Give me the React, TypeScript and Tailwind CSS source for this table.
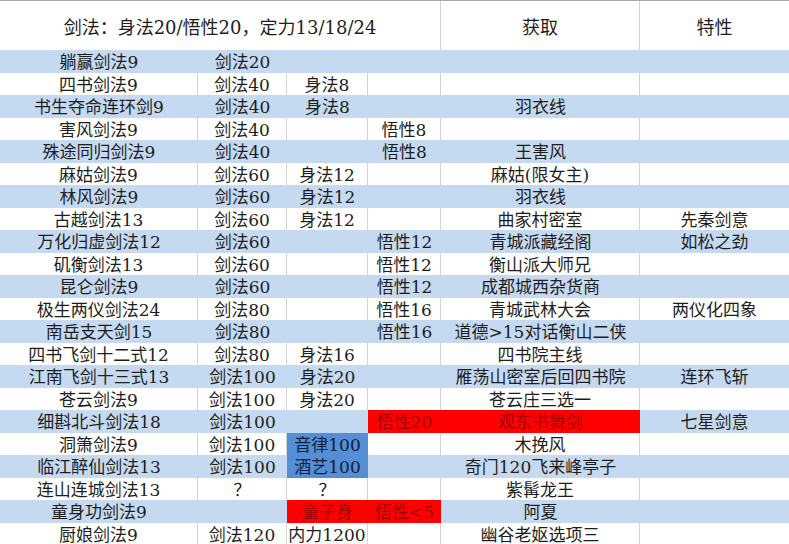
import React from "react";

type Cell = { t?: string; bg?: "red" | "dblue" };
type Row = [string, string, Cell | string, Cell | string, Cell | string, string];

const rows: Row[] = [
  ["躺赢剑法9", "剑法20", "", "", "", ""],
  ["四书剑法9", "剑法40", "身法8", "", "", ""],
  ["书生夺命连环剑9", "剑法40", "身法8", "", "羽衣线", ""],
  ["害风剑法9", "剑法40", "", "悟性8", "", ""],
  ["殊途同归剑法9", "剑法40", "", "悟性8", "王害风", ""],
  ["麻姑剑法9", "剑法60", "身法12", "", "麻姑(限女主)", ""],
  ["林风剑法9", "剑法60", "身法12", "", "羽衣线", ""],
  ["古越剑法13", "剑法60", "身法12", "", "曲家村密室", "先秦剑意"],
  ["万化归虚剑法12", "剑法60", "", "悟性12", "青城派藏经阁", "如松之劲"],
  ["矶衡剑法13", "剑法60", "", "悟性12", "衡山派大师兄", ""],
  ["昆仑剑法9", "剑法60", "", "悟性12", "成都城西杂货商", ""],
  ["极生两仪剑法24", "剑法80", "", "悟性16", "青城武林大会", "两仪化四象"],
  ["南岳支天剑15", "剑法80", "", "悟性16", "道德>15对话衡山二侠", ""],
  ["四书飞剑十二式12", "剑法80", "身法16", "", "四书院主线", ""],
  ["江南飞剑十三式13", "剑法100", "身法20", "", "雁荡山密室后回四书院", "连环飞斩"],
  ["苍云剑法9", "剑法100", "身法20", "", "苍云庄三选一", ""],
  ["细斟北斗剑法18", "剑法100", "", { t: "悟性20", bg: "red" }, { t: "观东书舞剑", bg: "red" }, "七星剑意"],
  ["洞箫剑法9", "剑法100", { t: "音律100", bg: "dblue" }, "", "木挽风", ""],
  ["临江醉仙剑法13", "剑法100", { t: "酒艺100", bg: "dblue" }, "", "奇门120飞来峰亭子", ""],
  ["连山连城剑法13", "？", "？", "", "紫髯龙王", ""],
  ["童身功剑法9", "", { t: "童子身", bg: "red" }, { t: "悟性<5", bg: "red" }, "阿夏", ""],
  ["厨娘剑法9", "剑法120", "内力1200", "", "幽谷老妪选项三", ""],
];

const widths = ["w-[198px]", "w-[89px]", "w-[81px]", "w-[73px]", "w-[199px]", "flex-1"];

function norm(c: Cell | string): Cell {
  return typeof c === "string" ? { t: c } : c;
}

export default function App() {
  return (
    <div
      className="w-[789px] h-[544px] overflow-hidden bg-white text-[#1e1e1e]"
      style={{ fontFamily: '"DejaVu Serif", "Noto Sans CJK SC", serif' }}
    >
      <div className="flex h-[50px] border-t border-[#a9a9a9] text-[18px]">
        <div className="w-[441px] border-r border-[#d4d4d4] flex items-center justify-center pt-[3px]">
          剑法：身法20/悟性20，定力13/18/24
        </div>
        <div className="w-[199px] border-r border-[#d4d4d4] flex items-center justify-center pt-[3px]">
          获取
        </div>
        <div className="flex-1 flex items-center justify-center pt-[3px]">特性</div>
      </div>
      {rows.map((r, i) => {
        const blue = i % 2 === 0;
        return (
          <div
            key={i}
            className={`flex h-[22.5px] text-[17px] leading-none ${blue ? "bg-[#c5d9f1]" : "bg-white"}`}
          >
            {r.map((c, j) => {
              const cell = norm(c);
              const bgc =
                cell.bg === "red"
                  ? "bg-[#ff0000] text-[#a00000]"
                  : cell.bg === "dblue"
                  ? "bg-[#558ed5] text-[#102040]"
                  : "";
              const border = !blue && j < 5 && !cell.bg ? "border-r border-[#d4d4d4]" : "";
              return (
                <div
                  key={j}
                  className={`${widths[j]} ${bgc} ${border} flex items-center justify-center whitespace-nowrap pt-[3px] overflow-visible`}
                >
                  {cell.t}
                </div>
              );
            })}
          </div>
        );
      })}
    </div>
  );
}
